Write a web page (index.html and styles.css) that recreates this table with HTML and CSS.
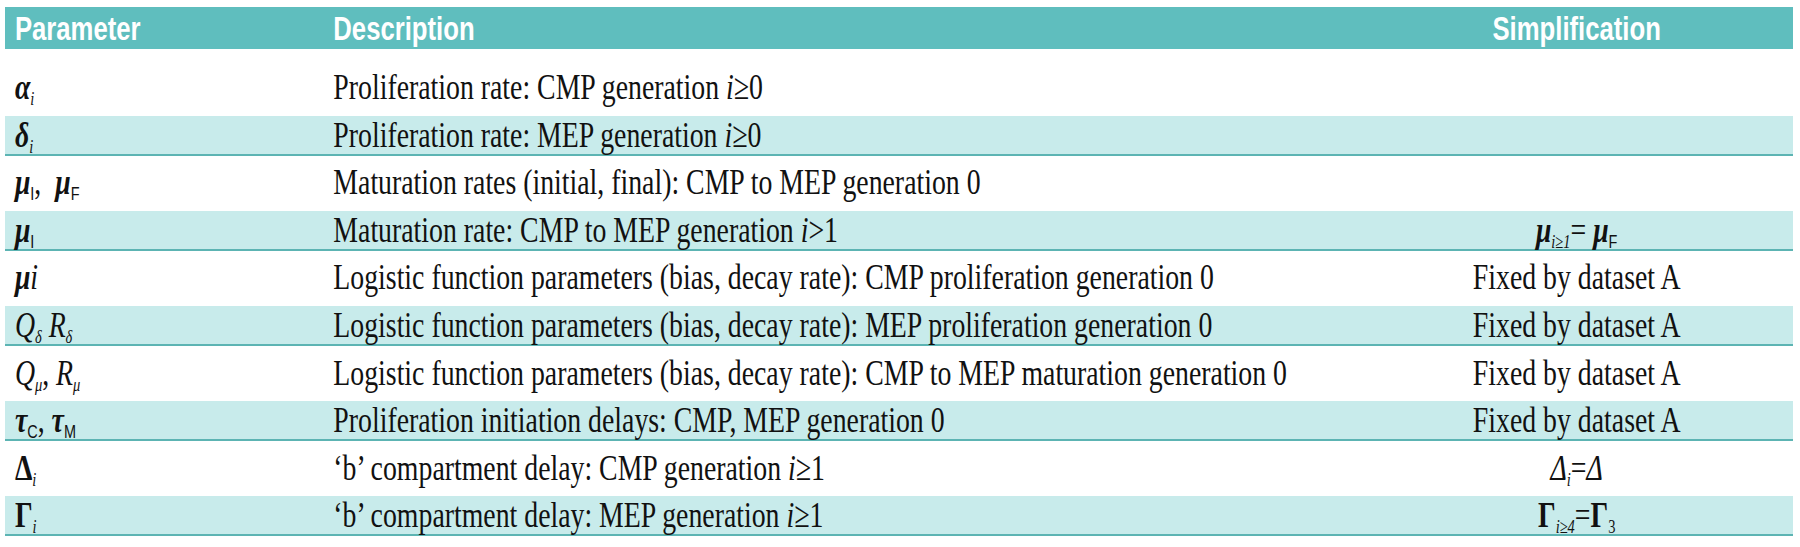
FILE: index.html
```html
<!DOCTYPE html>
<html lang="en">
<head>
<meta charset="utf-8">
<title>Parameters</title>
<link rel="stylesheet" href="styles.css">
</head>
<body>
<div class="frame">
<div class="table">
  <div class="row head">
    <div class="cell c1">Parameter</div>
    <div class="cell c2">Description</div>
    <div class="cell c3">Simplification</div>
  </div>

  <div class="row first">
    <div class="cell c1"><span class="gk">α</span><sub class="it">i</sub></div>
    <div class="cell c2">Proliferation rate: CMP generation <span class="it">i</span>≥0</div>
    <div class="cell c3"></div>
  </div>

  <div class="row shaded">
    <div class="cell c1"><span class="gk">δ</span><sub class="it">i</sub></div>
    <div class="cell c2">Proliferation rate: MEP generation <span class="it">i</span>≥0</div>
    <div class="cell c3"></div>
  </div>

  <div class="row">
    <div class="cell c1"><span class="gk">μ</span><sub class="ss">I</sub>,&nbsp; <span class="gk">μ</span><sub class="ss">F</sub></div>
    <div class="cell c2">Maturation rates (initial, final): CMP to MEP generation 0</div>
    <div class="cell c3"></div>
  </div>

  <div class="row shaded">
    <div class="cell c1"><span class="gk">μ</span><sub class="ss">I</sub></div>
    <div class="cell c2">Maturation rate: CMP to MEP generation <span class="it">i</span>&gt;1</div>
    <div class="cell c3"><span class="gk">μ</span><sub class="it">i≥1</sub>= <span class="gk">μ</span><sub class="ss">F</sub></div>
  </div>

  <div class="row">
    <div class="cell c1"><span class="gk">μ</span><span class="it">i</span></div>
    <div class="cell c2">Logistic function parameters (bias, decay rate): CMP proliferation generation 0</div>
    <div class="cell c3">Fixed by dataset A</div>
  </div>

  <div class="row shaded">
    <div class="cell c1"><span class="it">Q</span><sub class="it">δ</sub> <span class="it">R</span><sub class="it">δ</sub></div>
    <div class="cell c2">Logistic function parameters (bias, decay rate): MEP proliferation generation 0</div>
    <div class="cell c3">Fixed by dataset A</div>
  </div>

  <div class="row">
    <div class="cell c1"><span class="it">Q</span><sub class="it">μ</sub>, <span class="it">R</span><sub class="it">μ</sub></div>
    <div class="cell c2">Logistic function parameters (bias, decay rate): CMP to MEP maturation generation 0</div>
    <div class="cell c3">Fixed by dataset A</div>
  </div>

  <div class="row shaded">
    <div class="cell c1"><span class="gk">τ</span><sub class="ss">C</sub>, <span class="gk">τ</span><sub class="ss">M</sub></div>
    <div class="cell c2">Proliferation initiation delays: CMP, MEP generation 0</div>
    <div class="cell c3">Fixed by dataset A</div>
  </div>

  <div class="row">
    <div class="cell c1"><span class="up">Δ</span><sub class="it">i</sub></div>
    <div class="cell c2">‘b’ compartment delay: CMP generation <span class="it">i</span>≥1</div>
    <div class="cell c3"><span class="it">Δ</span><sub class="it">i</sub>=<span class="it">Δ</span></div>
  </div>

  <div class="row shaded">
    <div class="cell c1"><span class="up">Γ</span><sub class="it">i</sub></div>
    <div class="cell c2">‘b’ compartment delay: MEP generation <span class="it">i</span>≥1</div>
    <div class="cell c3"><span class="up">Γ</span><sub class="it">i≥4</sub>=<span class="up">Γ</span><sub>3</sub></div>
  </div>
</div>
</div>
</body>
</html>
```

FILE: styles.css
```css
html, body {
  margin: 0;
  padding: 0;
  background: #ffffff;
}

.frame {
  width: 1788px;
  margin: 7px 0 0 5px;
  overflow: hidden;
}

.table {
  width: 2353px;
  transform: scaleX(0.76);
  transform-origin: 0 0;
  font-family: "Liberation Serif", "Times New Roman", serif;
  font-size: 36.6px;
  color: #111111;
}

.row {
  display: grid;
  grid-template-columns: 419px 1364px 570px;
  height: 38px;
  margin-top: 7.6px;
  border-bottom: 2px solid transparent;
}

.row.head {
  height: 42px;
  margin-top: 0;
  border-bottom: 0;
  background: #5fbebe;
  color: #ffffff;
  font-family: "Liberation Sans", Arial, sans-serif;
  font-weight: 700;
  font-size: 33.8px;
}

.row.head .cell {
  line-height: 42px;
}

.row.first {
  margin-top: 19px;
}

.row.shaded {
  background: #c8ebeb;
  border-bottom-color: #5cb4b3;
}

.cell {
  white-space: nowrap;
  line-height: 38px;
}

.c1, .c2 {
  padding-left: 13px;
}

.c3 {
  text-align: center;
}

.it {
  font-style: italic;
}

.gk {
  font-style: italic;
  font-weight: 700;
}

.up {
  font-weight: 700;
}

sub {
  font-size: 52%;
  vertical-align: -0.3em;
  line-height: 0;
}

sub.ss {
  font-family: "Liberation Sans", Arial, sans-serif;
  font-style: normal;
}
```
